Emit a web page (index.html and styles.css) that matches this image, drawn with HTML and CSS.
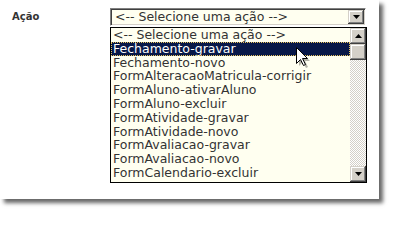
FILE: index.html
```html
<!DOCTYPE html>
<html lang="pt">
<head>
<meta charset="utf-8">
<title>Ação</title>
<link rel="stylesheet" href="styles.css">
</head>
<body>
<div class="page">
<div class="panel">
  <div class="field">
    <div class="label">Ação</div>
    <div class="control">
      <div class="select">
        <span class="value">&lt;-- Selecione uma ação --&gt;</span>
        <span class="btn"><svg width="7" height="4" viewBox="0 0 7 4"><path d="M0 0h7L3.5 4z" fill="#000"/></svg></span>
      </div>
      <div class="list">
        <ul class="options">
          <li>&lt;-- Selecione uma ação --&gt;</li>
          <li class="sel">Fechamento-gravar</li>
          <li>Fechamento-novo</li>
          <li>FormAlteracaoMatricula-corrigir</li>
          <li>FormAluno-ativarAluno</li>
          <li>FormAluno-excluir</li>
          <li>FormAtividade-gravar</li>
          <li>FormAtividade-novo</li>
          <li>FormAvaliacao-gravar</li>
          <li>FormAvaliacao-novo</li>
          <li>FormCalendario-excluir</li>
        </ul>
        <div class="scrollbar">
          <div class="sbtn"><svg width="7" height="4" viewBox="0 0 7 4"><path d="M3.5 0L7 4H0z" fill="#000"/></svg></div>
          <div class="sbtn thumb"></div>
          <div class="track">
            <svg width="16" height="106">
              <defs>
                <pattern id="dither" width="2" height="2" patternUnits="userSpaceOnUse">
                  <rect width="2" height="2" fill="#ffffff"/>
                  <rect width="1" height="1" fill="#d4d0c8"/>
                  <rect x="1" y="1" width="1" height="1" fill="#d4d0c8"/>
                </pattern>
              </defs>
              <rect width="16" height="106" fill="url(#dither)"/>
            </svg>
          </div>
          <div class="sbtn"><svg width="7" height="4" viewBox="0 0 7 4"><path d="M0 0h7L3.5 4z" fill="#000"/></svg></div>
        </div>
      </div>
    </div>
  </div>
  <svg class="cursor" width="16" height="24" viewBox="0 0 16 24">
    <path d="M0.5,0.5 L0.5,16.5 L4.5,12.5 L7.5,18.5 L9.5,17.5 L6.5,11.5 L11.5,11.5 Z" fill="rgba(0,0,0,0.3)" transform="translate(2.5,2.5)"/>
    <path d="M0.5,0.5 L0.5,16.5 L4.5,12.5 L7.5,18.5 L9.5,17.5 L6.5,11.5 L11.5,11.5 Z" fill="#fff" stroke="#000" stroke-width="1" stroke-linejoin="miter"/>
  </svg>
</div>
</div>
</body>
</html>
```

FILE: styles.css
```css
html, body {
  margin: 0;
  padding: 0;
  background: #ffffff;
}

.page {
  width: 400px;
  height: 218px;
  overflow: hidden;
}

.panel {
  position: relative;
  width: 379px;
  height: 199px;
  background: #ffffff;
  box-shadow: 4px 4px 4px rgba(0, 0, 0, 0.6);
}

.field {
  display: flex;
}

.label {
  width: 98px;
  padding: 11px 0 0 12px;
  font: bold 10px/12px "DejaVu Sans", Verdana, sans-serif;
  color: #333333;
}

.control {
  padding-top: 8px;
}

.select {
  box-sizing: border-box;
  width: 256px;
  height: 18px;
  display: flex;
  background: #fffff0;
  border: 1px solid;
  border-color: #808080 #ffffff #ffffff #808080;
  padding: 1px;
  box-shadow: inset 1px 1px 0 #404040, inset -1px -1px 0 #d4d0c8;
}

.value {
  flex: 1;
  padding-left: 3px;
  font: 12.5px/14px "DejaVu Sans", Verdana, sans-serif;
  color: #333333;
  white-space: nowrap;
  overflow: hidden;
}

.btn,
.sbtn {
  display: flex;
  align-items: center;
  justify-content: center;
  background: #d4d0c8;
  box-shadow: inset -1px -1px 0 #404040, inset 1px 1px 0 #d4d0c8,
              inset -2px -2px 0 #808080, inset 2px 2px 0 #ffffff;
}

.btn {
  width: 16px;
  height: 14px;
}

.list {
  box-sizing: border-box;
  margin-top: 1px;
  width: 257px;
  height: 156px;
  border: 1px solid #000000;
  background: #fffff0;
  display: flex;
}

.options {
  flex: 1;
  margin: 0;
  padding: 0;
  list-style: none;
  overflow: hidden;
}

.options li {
  box-sizing: border-box;
  height: 13.8px;
  padding-left: 2px;
  font: 12.5px/13.8px "DejaVu Sans", Verdana, sans-serif;
  color: #333333;
  white-space: nowrap;
}

.options li.sel {
  background: #081848;
  color: #ffffff;
  outline: 1px dotted #e6c35c;
  outline-offset: -1px;
}

.scrollbar {
  width: 16px;
  display: flex;
  flex-direction: column;
}

.sbtn {
  height: 16px;
  flex: none;
}

.track {
  flex: 1;
  overflow: hidden;
  line-height: 0;
}

.track svg {
  display: block;
}

.cursor {
  position: absolute;
  left: 296px;
  top: 47px;
}
```
